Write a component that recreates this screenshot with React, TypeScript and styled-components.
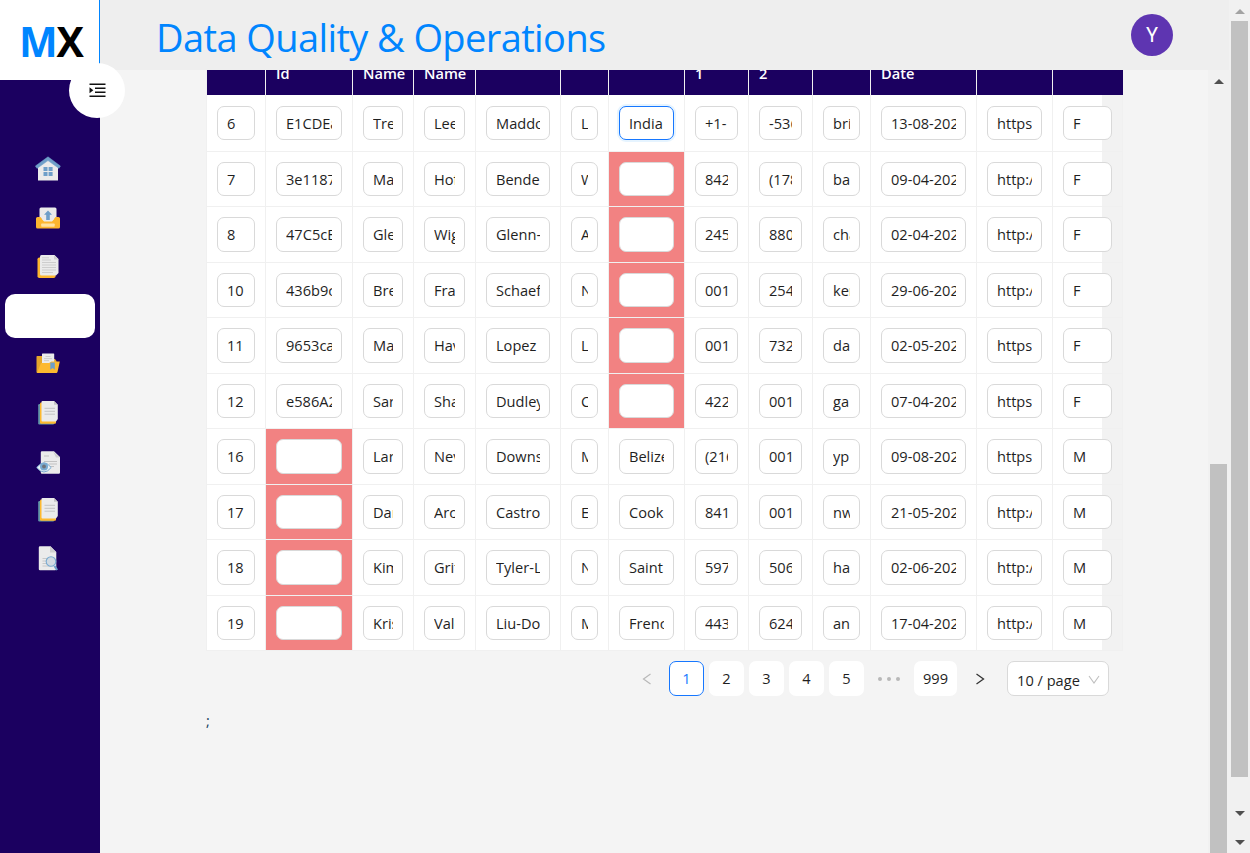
import React from "react";
import styled, { createGlobalStyle, css } from "styled-components";

const NAVY = "#1b0060";
const BLUE = "#0085ff";

const GlobalStyle = createGlobalStyle`
  * { box-sizing: border-box; }
  body { margin: 0; background: #f4f4f4; overflow: hidden; }
  #root { font-family: "Open Sans", "Noto Sans", sans-serif; font-size: 14.6px; color: #1f1f1f; }
`;

const Shell = styled.div`
  display: grid;
  grid-template-columns: 100px 1fr 21px;
  height: 853px;
  width: 1250px;
  overflow: hidden;
`;

const Sidebar = styled.aside`
  position: relative;
  z-index: 2;
  background: ${NAVY};
`;

const Logo = styled.div`
  height: 80px;
  padding: 13px 0 0 19px;
  background: #fff;
  border-right: 1px solid ${BLUE};
  font-size: 41px;
  line-height: 56px;
  font-weight: 700;
  letter-spacing: -1.2px;
  color: #000;
  span { color: ${BLUE}; }
`;

const Toggle = styled.button`
  position: absolute;
  left: 69px;
  top: 63px;
  width: 56px;
  height: 55px;
  padding: 0;
  border: 0;
  border-radius: 50%;
  background: #fff;
  display: grid;
  place-items: center;
`;

const Nav = styled.nav`
  padding: 67.75px 5px 0;
  display: flex;
  flex-direction: column;
  gap: 4.75px;
`;

const NavItem = styled.a<{ $active?: boolean }>`
  height: 44px;
  padding: 6.25px 0 0 28px;
  border-radius: 10px;
  background: ${(p) => (p.$active ? "#fff" : "transparent")};
  svg { display: block; }
`;

const Main = styled.div`
  display: flex;
  flex-direction: column;
  min-width: 0;
  height: 853px;
`;

const TopBar = styled.header`
  flex: 0 0 70px;
  display: flex;
  align-items: center;
  justify-content: space-between;
  padding: 0 56px;
  background: #eee;
`;

const Title = styled.h1`
  margin: 0;
  padding-top: 3px;
  font-size: 38px;
  line-height: 52px;
  font-weight: 500;
  letter-spacing: -0.6px;
  white-space: nowrap;
  color: ${BLUE};
`;

const Avatar = styled.div`
  width: 42px;
  height: 42px;
  border-radius: 50%;
  background: #5e35b1;
  border: 0;
  color: #fff;
  font: 400 20px/42px Roboto, sans-serif;
  text-align: center;
`;

const Body = styled.div`
  flex: 1;
  min-height: 0;
  display: flex;
  justify-content: space-between;
`;

const Content = styled.main`
  width: 1022px;
  padding-left: 106px;
`;

const Table = styled.div`
  width: 917px;
  border-left: 1px solid #f0f0f0;
  background: linear-gradient(to right, #fff 895px, #f2f2f2 895px);
`;

const gridColumns = css`
  display: grid;
  grid-template-columns: 59px 87px 61px 62px 85px 48px 76px 64px 64px 58px 106px 76px 70px;
`;

const HeadRow = styled.div`
  ${gridColumns}
  height: 25px;
`;

const HeadCell = styled.div`
  display: flex;
  align-items: flex-end;
  overflow: hidden;
  padding: 0 0 11px 10px;
  border-right: 1px solid #f0f0f0;
  background: ${NAVY};
  color: #fff;
  font-weight: 600;
  line-height: 22px;
  &:last-child { border-right-color: ${NAVY}; }
`;

const Row = styled.div<{ $first?: boolean; $tall?: boolean }>`
  ${gridColumns}
  height: ${(p) => (p.$first ? 57 : p.$tall ? 56 : 55)}px;
`;

const Cell = styled.div<{ $error?: boolean }>`
  min-width: 0;
  padding: 0 10px;
  display: flex;
  align-items: center;
  border-right: 1px solid #f0f0f0;
  border-bottom: 1px solid #f0f0f0;
  background: ${(p) => (p.$error ? "#f28282" : "transparent")};
`;

const Field = styled.div<{ $focused?: boolean }>`
  flex: 1;
  min-width: 0;
  height: 34.5px;
  padding: 0 9px;
  border: 1px solid ${(p) => (p.$focused ? "#1677ff" : "#d9d9d9")};
  border-radius: 7px;
  background: #fff;
  box-shadow: ${(p) => (p.$focused ? "0 0 0 2px rgba(5,145,255,.1)" : "none")};
`;

const Value = styled.div`
  overflow: hidden;
  white-space: nowrap;
  line-height: 32px;
`;

const Pagination = styled.div`
  display: flex;
  align-items: center;
  gap: 5px;
  margin-top: 10px;
  padding-left: 423px;
`;

const PageItem = styled.button<{ $current?: boolean; $plain?: boolean }>`
  min-width: 35px;
  height: 35px;
  padding: 0 8px;
  display: flex;
  align-items: center;
  justify-content: center;
  border: 1px solid ${(p) => (p.$current ? "#1677ff" : "transparent")};
  border-radius: 7px;
  background: ${(p) => (p.$plain ? "transparent" : "#fff")};
  background-clip: border-box;
  color: ${(p) => (p.$current ? "#1677ff" : "#1f1f1f")};
  font: inherit;
  line-height: 33px;
`;

const SizeSelect = styled.div`
  width: 102px;
  height: 35px;
  margin-left: 5px;
  padding: 2px 8px 0 9px;
  display: flex;
  align-items: center;
  justify-content: space-between;
  border: 1px solid #d9d9d9;
  border-radius: 7px;
  background: #fff;
  white-space: nowrap;
`;

const Footnote = styled.div`
  margin-top: 13px;
  line-height: 22px;
  color: #17405c;
`;

const Track = styled.div`
  display: flex;
  flex-direction: column;
  align-items: center;
  width: 21px;
  background: #f1f1f1;
`;

const Thumb = styled.div<{ $height: number }>`
  width: 17px;
  height: ${(p) => p.$height}px;
  background: #c1c1c1;
`;

const Arrow = styled.div<{ $down?: boolean; $faint?: boolean; $before: number; $after: number }>`
  width: 0;
  height: 0;
  margin: ${(p) => p.$before}px 0 ${(p) => p.$after}px;
  border: 5px solid transparent;
  border-width: ${(p) => (p.$down ? "5px 5px 0" : "0 5px 5px")};
  border-${"top"}-color: ${(p) => (p.$down ? "#505050" : "transparent")};
  border-bottom-color: ${(p) => (p.$down ? "transparent" : p.$faint ? "#a3a3a3" : "#505050")};
`;

const Glyph = ({ children }: { children?: React.ReactNode }) => (
  <svg width="30" height="30" viewBox="0 0 30 30" fill="none">{children}</svg>
);

const HomeIcon = () => (
  <Glyph>
    <path d="M5 12 15 4l10 8v14.5H5z" fill="#ebebeb" />
    <path d="M15 2.8 27.4 12 26 14.4 15 6.6 4 14.4 2.4 12z" fill="#6e9fc9" stroke="#6e9fc9" strokeLinejoin="round" strokeWidth=".5" />
    <path d="M10.5 13h4v4h-4zM15.6 13h4v4h-4zM10.5 18h4v4h-4zM15.6 18h4v4h-4z" fill="#6e9fc9" />
  </Glyph>
);

const UploadIcon = () => (
  <Glyph>
    <path d="M4.5 14h21a1.500 1.500 0 0 1 1.500 1.500v8.500a1.500 1.500 0 0 1-1.500 1.500h-21a1.500 1.500 0 0 1-1.500-1.500v-8.500A1.500 1.500 0 0 1 4.500 14z" fill="#fdb62f" />
    <rect x="6.500" y="4.500" width="17" height="13" rx="1.500" fill="#ebebeb" />
    <path d="M6 14h1.500l3.500 4.500h8l3.500-4.500H24v6H6z" fill="#fdb62f" />
    <path d="M9 13h12v3l-2 2.500h-8L9 16z" fill="#ebebeb" />
    <path d="m15 7.500 4 4.300h-2.200V17h-3.600v-5.200H11z" fill="#6e9fc9" />
    <rect x="8.200" y="20.500" width="13.500" height="3.200" rx=".7" fill="#ffe2a0" />
  </Glyph>
);

const PagesIcon = () => (
  <Glyph>
    <rect x="4.500" y="5.500" width="18" height="20.500" rx="1.800" fill="#fdb62f" />
    <path d="M8.500 3h13L25.500 7v14l-2.500 2.500H8.500A1.500 1.500 0 0 1 7 22V4.500A1.500 1.500 0 0 1 8.500 3z" fill="#ebebeb" />
    <path d="M21 3v4.500h4.500z" fill="#cfcfcf" />
    <path d="M9 5.800h7M9 8h9M9 10.500h14M9 13h14M9 15.500h14M9 18h14M9 20.500h11" stroke="#c9c9c9" strokeWidth=".9" />
  </Glyph>
);

const FolderIcon = () => (
  <Glyph>
    <path d="M4 7h6l2 3h10l1.500 2V24H4.500A1 1 0 0 1 3.500 23V7.500z" fill="#e5a52b" />
    <path d="M9 5a.6.6 0 0 1 .6-.6h11a.6.6 0 0 1 .6.6v9H9z" fill="#ebebeb" />
    <path d="M12.500 7.500h5M11 9.600h8M11 11.600h5" stroke="#c9c9c9" strokeWidth=".9" />
    <path d="M8 14h8l2.500-1.500h8.300L24.500 23a1.500 1.500 0 0 1-1.500 1H4z" fill="#fdb92f" />
    <path d="M17.300 13.500h4.500v7.300l-2.200-1.700-2.300 1.700z" fill="#6e9fc9" />
  </Glyph>
);

const DocsIcon = () => (
  <Glyph>
    <rect x="5.200" y="6" width="16" height="20.500" rx="1.200" fill="#6397a8" />
    <rect x="7" y="4.500" width="16" height="21.300" rx="1.200" fill="#fdb92f" />
    <path d="M9.500 3H21l3.800 3.800V21L23 23.500H9.500a1 1 0 0 1-1-1V4a1 1 0 0 1 1-1z" fill="#ebebeb" />
    <path d="M21 3v3.800h3.800z" fill="#c4c4c4" />
    <path d="M11.500 10.300h10.500M11.500 13.300h10.500M11.500 16.200h10.500" stroke="#c4c4c4" />
  </Glyph>
);

const ReviewIcon = () => (
  <Glyph>
    <path d="M9 4.200h12L27 10v15.500a1.200 1.200 0 0 1-1.200 1.200H9A1.200 1.200 0 0 1 7.800 25.500v-20A1.200 1.200 0 0 1 9 4.200z" fill="#ebebeb" />
    <path d="M20 4.200 27 10.500h-4z" fill="#cfcfcf" />
    <path d="M11 9h5M11 14.500h13M16 17h8M17 19.500h4" stroke="#c2c2c2" strokeWidth="1.100" />
    <path d="M3.700 20.500q7.300-9 14.500 0-7.200 9-14.500 0z" fill="#ebf2f8" stroke="#79aad1" strokeWidth="1" />
    <circle cx="11" cy="19.500" r="4" fill="#79aad1" />
    <circle cx="11" cy="19.500" r="1.900" fill="#70737b" />
  </Glyph>
);

const SearchIcon = () => (
  <Glyph>
    <path d="M7 2.300h10.500l5.800 5.800v17a1.200 1.200 0 0 1-1.200 1.200H7A1.200 1.200 0 0 1 5.800 25.200V3.500A1.200 1.200 0 0 1 7 2.300z" fill="#ebebeb" />
    <path d="M17 2.300v6.300h6.300z" fill="#cfcfcf" />
    <path d="M9.500 14.500H16M9.500 17H16M9.500 19.500H16M9.500 22H18" stroke="#c4c4c4" strokeWidth=".9" />
    <circle cx="18" cy="17.500" r="4.800" fill="#d2dae1" stroke="#79aad1" strokeWidth="1.100" />
    <path d="m21.500 22 2.600 4" stroke="#6e9fc9" strokeWidth="2.200" />
  </Glyph>
);

const navIcons = [HomeIcon, UploadIcon, PagesIcon, null, FolderIcon, DocsIcon, ReviewIcon, DocsIcon, SearchIcon];

const headings = ["", "Id", "Name", "Name", "", "", "", "1", "2", "", "Date", "", ""];

const records = [
  ["6", "E1CDEa", "Trev", "Lee", "Maddox", "L", "India", "+1-", "-536", "bri", "13-08-2021", "https:", "F"],
  ["7", "3e1187", "Ma", "Hof", "Bender,", "W", "", "842", "(178", "ba", "09-04-2021", "http:/", "F"],
  ["8", "47C5cE", "Gler", "Wigg", "Glenn-", "A", "", "245", "880", "cha", "02-04-2020", "http:/", "F"],
  ["10", "436b9c", "Bre", "Fra", "Schaefe", "N", "", "001", "254", "ker", "29-06-2020", "http:/", "F"],
  ["11", "9653ca", "Ma", "Hav", "Lopez I", "L", "", "001", "732", "da", "02-05-2021", "https:", "F"],
  ["12", "e586A2", "Sar", "Sha", "Dudley", "C", "", "422", "001", "ga", "07-04-2021", "https:", "F"],
  ["16", "", "Lar", "Nev", "Downs", "M", "Belize", "(216", "001", "yp", "09-08-2020", "https:", "M"],
  ["17", "", "Dan", "Arc", "Castro,", "E", "Cook", "841", "001", "nw", "21-05-2020", "http:/", "M"],
  ["18", "", "Kim", "Grif", "Tyler-Lo", "N", "Saint", "597", "506", "ha", "02-06-2021", "http:/", "M"],
  ["19", "", "Kris", "Vale", "Liu-Do", "M", "Frenc", "443", "624", "an", "17-04-2021", "http:/", "M"],
];

export default function App() {
  return (
    <Shell>
      <GlobalStyle />
      <Sidebar>
        <Logo><span>M</span>X</Logo>
        <Toggle aria-label="Toggle menu">
          <svg width="17" height="15" viewBox="0 0 17 15" fill="none">
            <path d="M.5 1.200h16M6 5.200h10.500M6 9.200h10.500M.5 13.200h16" stroke="#111" strokeWidth="1.400" />
            <path d="M.5 4.200v6L4.300 7.200z" fill="#111" />
          </svg>
        </Toggle>
        <Nav>
          {navIcons.map((Icon, i) => (
            <NavItem key={i} $active={!Icon}>{Icon && <Icon />}</NavItem>
          ))}
        </Nav>
      </Sidebar>
      <Main>
        <TopBar>
          <Title>Data Quality &amp; Operations</Title>
          <Avatar>Y</Avatar>
        </TopBar>
        <Body>
          <Content>
            <Table>
              <HeadRow>
                {headings.map((h, i) => <HeadCell key={i}>{h}</HeadCell>)}
              </HeadRow>
              {records.map((record, r) => (
                <Row key={record[0]} $first={r === 0} $tall={r % 2 === 0}>
                  {record.map((value, c) => (
                    <Cell key={c} $error={!value}>
                      <Field $focused={r === 0 && c === 6}>
                        <Value>{value}</Value>
                      </Field>
                    </Cell>
                  ))}
                </Row>
              ))}
            </Table>
            <Pagination>
              <PageItem $plain aria-label="Previous">
                <svg width="10" height="12" viewBox="0 0 10 12" fill="none"><path d="M8.500 1 1.500 6l7 5" stroke="#b8b8b8" strokeWidth="1.200" /></svg>
              </PageItem>
              <PageItem $current>1</PageItem>
              <PageItem>2</PageItem>
              <PageItem>3</PageItem>
              <PageItem>4</PageItem>
              <PageItem>5</PageItem>
              <PageItem $plain aria-label="More pages">
                <svg width="22" height="4" viewBox="0 0 22 4" fill="#b8b8b8"><circle cx="2" cy="2" r="2" /><circle cx="11" cy="2" r="2" /><circle cx="20" cy="2" r="2" /></svg>
              </PageItem>
              <PageItem>999</PageItem>
              <PageItem $plain aria-label="Next">
                <svg width="10" height="12" viewBox="0 0 10 12" fill="none"><path d="m1.500 1 7 5-7 5" stroke="#333" strokeWidth="1.300" /></svg>
              </PageItem>
              <SizeSelect>
                10 / page
                <svg width="12" height="10" viewBox="0 0 12 10" fill="none"><path d="m1 1 5 7 5-7" stroke="#bfbfbf" strokeWidth="1.100" /></svg>
              </SizeSelect>
            </Pagination>
            <Footnote>;</Footnote>
          </Content>
          <Track>
            <Arrow $before={9} $after={380} />
            <Thumb $height={389} />
          </Track>
        </Body>
      </Main>
      <Track>
        <Arrow $faint $before={9} $after={7} />
        <Thumb $height={756} />
        <Arrow $down $before={34} $after={24} />
        <Arrow $down $before={0} $after={0} />
      </Track>
    </Shell>
  );
}
